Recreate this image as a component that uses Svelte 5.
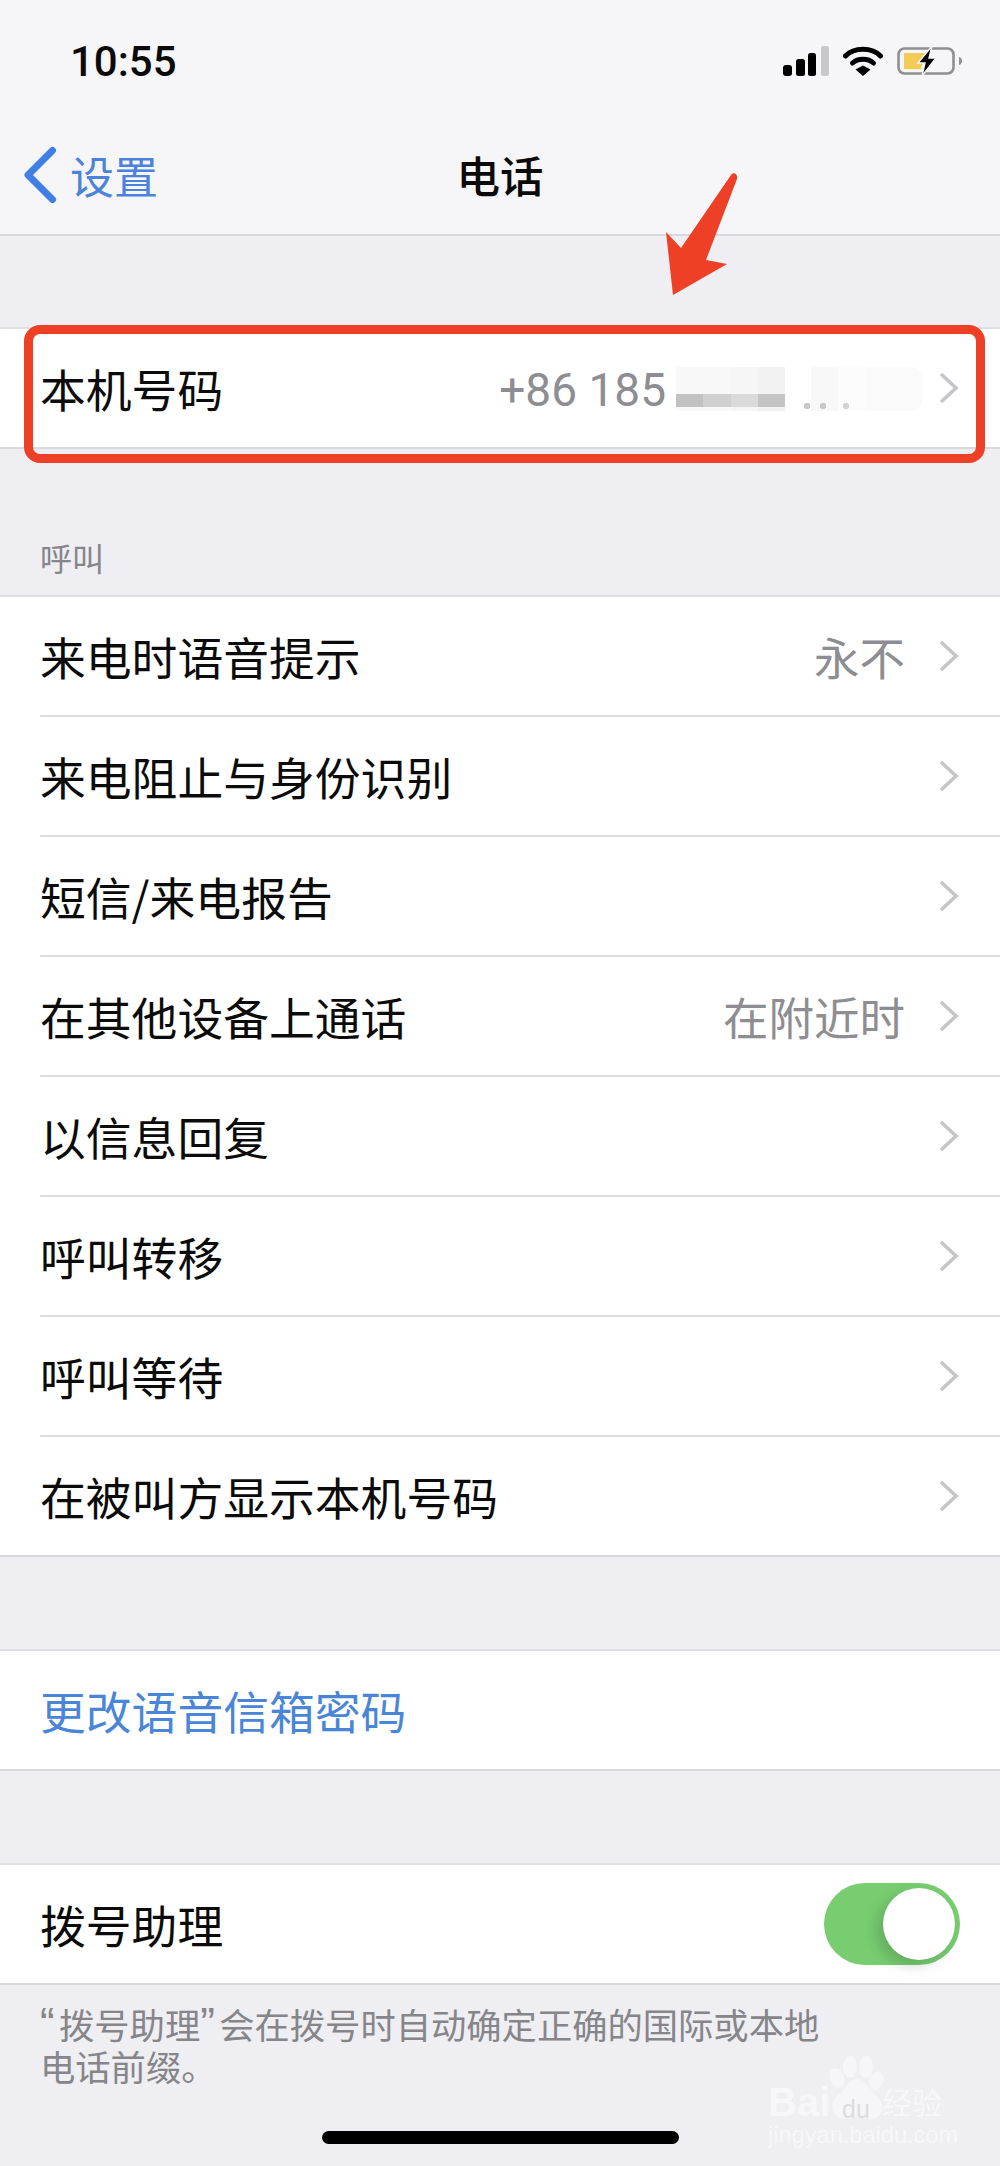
<script>
  const calls = [
    { t: '来电时语音提示', v: '永不' },
    { t: '来电阻止与身份识别' },
    { t: '短信/来电报告' },
    { t: '在其他设备上通话', v: '在附近时' },
    { t: '以信息回复' },
    { t: '呼叫转移' },
    { t: '呼叫等待' },
    { t: '在被叫方显示本机号码' }
  ];
</script>

<div class="page">
  <header class="nav">
    <div class="status">
      <span class="time">10:55</span>
      <div class="status-icons">
        <svg width="46" height="30" viewBox="0 0 46 30">
          <rect x="0" y="19" width="9" height="11" rx="3" fill="#000"/>
          <rect x="13" y="13" width="9" height="17" rx="2.5" fill="#000"/>
          <rect x="25" y="7" width="8" height="23" rx="2.5" fill="#000"/>
          <rect x="38" y="0" width="8" height="30" rx="2" fill="#c9c9cb"/>
        </svg>
        <svg width="40" height="30" viewBox="0 0 40 30">
          <path d="M2.5 10 C11 1 29 1 37.5 10" fill="none" stroke="#000" stroke-width="5" stroke-linecap="round"/>
          <path d="M9.5 17 C15 12 25 12 30.5 17" fill="none" stroke="#000" stroke-width="5" stroke-linecap="round"/>
          <path d="M12.5 23.5 L20 19.5 L27.5 23.5 L20 30 Z" fill="#000"/>
        </svg>
        <svg width="66" height="30" viewBox="0 0 66 30">
          <rect x="1.5" y="2.5" width="55" height="25" rx="6" fill="none" stroke="#8f8f91" stroke-width="2.6"/>
          <path d="M7 7 H28 L24 23 H7 Z" fill="#f2cc55"/>
          <path d="M62 11 C66 12 66 18 62 19 Z" fill="#8f8f91"/>
          <path d="M35 0 L21 17 H28 L25 30 L39 12 H32 Z" fill="#000" stroke="#f6f6f9" stroke-width="1.4"/>
        </svg>
      </div>
    </div>
    <div class="bar">
      <div class="back">
        <svg width="34" height="58" viewBox="0 0 34 58">
          <path d="M29.5 4.5 L5 29 L29.5 53.5" fill="none" stroke="#3f7fe6" stroke-width="7" stroke-linecap="round" stroke-linejoin="round"/>
        </svg>
        <span>设置</span>
      </div>
      <h1>电话</h1>
    </div>
  </header>

  <section class="group first">
    <div class="row">
      <span class="title">本机号码</span>
      <span class="value number">+86 185</span>
      <div class="mask"></div>
      <svg class="chev" width="22" height="34" viewBox="0 0 22 34"><path d="M3 3 L18 17 L3 31" fill="none" stroke="#c6c6ca" stroke-width="3.6"/></svg>
    </div>
  </section>

  <div class="label">呼叫</div>
  <section class="group">
    {#each calls as c}
      <div class="row">
        <span class="title">{c.t}</span>
        {#if c.v}<span class="value">{c.v}</span>{/if}
        <svg class="chev" width="22" height="34" viewBox="0 0 22 34"><path d="M3 3 L18 17 L3 31" fill="none" stroke="#c6c6ca" stroke-width="3.6"/></svg>
      </div>
    {/each}
  </section>

  <section class="group gap">
    <div class="row"><span class="title link">更改语音信箱密码</span></div>
  </section>

  <section class="group gap">
    <div class="row">
      <span class="title">拨号助理</span>
      <div class="toggle"><div class="knob"></div></div>
    </div>
  </section>

  <p class="foot"><span class="q">“</span>拨号助理<span class="q">”</span>会在拨号时自动确定正确的国际或本地<br/>电话前缀。</p>

  <div class="home"></div>

  <div class="highlight"></div>
  <svg class="arrow" width="80" height="130" viewBox="0 0 80 130">
    <path d="M71 5 C73 2 78 3 77 9 L46 90 L67 94 L13 125 L6 62 L21 78 Z" fill="#ee4026"/>
  </svg>

  <div class="paw">
    <svg width="60" height="66" viewBox="0 0 60 66">
      <g fill="#f6f6f9">
        <ellipse cx="9" cy="25" rx="7" ry="10" transform="rotate(-20 9 25)"/>
        <ellipse cx="22" cy="14" rx="7" ry="11"/>
        <ellipse cx="38" cy="14" rx="7" ry="11"/>
        <ellipse cx="48" cy="28" rx="7" ry="10" transform="rotate(20 48 28)"/>
        <path d="M29 26 C20 26 18 36 10 42 C0 50 4 66 18 66 C24 66 26 64 30 64 C34 64 37 66 43 66 C56 66 58 50 48 42 C40 36 38 26 29 26 Z"/>
      </g>
    </svg>
    <span class="b1">Bai</span><span class="b2">du</span><span class="b3">经验</span>
    <span class="b4">jingyan.baidu.com</span>
  </div>
</div>

<style>
  :global(body) { margin: 0; background: #eeeef3; }
  .page {
    position: relative;
    width: 1000px;
    height: 2166px;
    overflow: hidden;
    background: #eeeef3;
    font-family: "Noto Sans CJK SC", "Liberation Sans", sans-serif;
    color: #0b0b0b;
  }
  .nav {
    height: 234px;
    background: #f6f6f9;
    border-bottom: 2px solid #d9d9dd;
  }
  .status {
    height: 124px;
    display: flex;
    align-items: flex-start;
    justify-content: space-between;
    padding: 0 37px 0 70px;
  }
  .time {
    margin-top: 39px;
    font: 500 42px/46px Roboto, sans-serif;
    color: #0a0a0a;
  }
  .status-icons {
    display: flex;
    align-items: flex-start;
    gap: 14px;
    margin-top: 46px;
  }
  .status-icons svg { display: block; }
  .bar {
    position: relative;
    height: 110px;
    display: flex;
    align-items: center;
    justify-content: center;
  }
  .back {
    position: absolute;
    left: 23px;
    top: 0;
    bottom: 8px;
    display: flex;
    align-items: center;
    gap: 13px;
    color: #4a82dc;
    font-size: 44px;
    line-height: 56px;
  }
  h1 {
    margin: -8px 0 0;
    font-size: 43.5px;
    line-height: 60px;
    font-weight: 500;
    color: #0a0a0a;
  }
  .group {
    background: #fff;
    border-top: 2px solid #dfdfe3;
    border-bottom: 2px solid #d9d9dd;
  }
  .first { margin-top: 91px; }
  .gap { margin-top: 92px; }
  .label {
    height: 146px;
    padding: 88px 0 0 40px;
    box-sizing: border-box;
    font-size: 32px;
    line-height: 40px;
    color: #85858a;
  }
  .row {
    position: relative;
    height: 118px;
    margin-left: 40px;
    padding-right: 40px;
    display: flex;
    align-items: center;
    border-bottom: 2px solid #dcdce0;
  }
  .row:last-child { border-bottom: 0; }
  .title {
    flex: 1;
    font-size: 45.8px;
    line-height: 60px;
  }
  .link { color: #4a86d8; }
  .value {
    font-size: 45.5px;
    line-height: 60px;
    color: #8d8d92;
    margin-right: 33px;
  }
  .number {
    position: relative;
    top: 2px;
    font-family: Roboto, sans-serif;
    font-size: 46px;
    margin-right: 272px;
  }
  .chev { display: block; flex: none; }
  .mask {
    position: absolute;
    left: 636px;
    top: 38px;
    width: 246px;
    height: 44px;
    border-radius: 0 10px 10px 0;
    background:
      radial-gradient(circle 3px at 131px 39px, #c8c8c8 98%, transparent) no-repeat,
      radial-gradient(circle 3px at 147px 39px, #c8c8c8 98%, transparent) no-repeat,
      radial-gradient(circle 3px at 170px 39px, #d4d4d4 98%, transparent) no-repeat,
      linear-gradient(90deg, #c2c2c2 0 27px, #d0d0d0 27px 55px, #dadada 55px 82px, #c4c4c4 82px 109px, transparent 109px) 0 27px / 100% 13px no-repeat,
      linear-gradient(90deg, #f8f8f8 0 55px, #f6f6f6 55px 82px, #f2f2f2 82px 109px, #fff 109px 135px, #f8f8f8 135px 162px, #fcfcfc 162px 190px, #fafafa 190px);
  }
  .toggle {
    position: relative;
    width: 136px;
    height: 82px;
    border-radius: 41px;
    background: #77cd70;
    flex: none;
  }
  .knob {
    position: absolute;
    right: 5px;
    top: 5px;
    width: 72px;
    height: 72px;
    border-radius: 50%;
    background: #fff;
    box-shadow: -6px 6px 14px rgba(0, 0, 0, .16);
  }
  .foot {
    margin: 0;
    padding: 18px 0 0 40px;
    font-size: 35.3px;
    line-height: 42px;
    color: #85858a;
  }
  .q {
    display: inline-block;
    width: 19px;
    vertical-align: top;
    font-family: "Liberation Sans", sans-serif;
    font-size: 44px;
    line-height: 42px;
  }
  .home {
    position: absolute;
    left: 322px;
    top: 2131px;
    width: 357px;
    height: 13px;
    border-radius: 7px;
    background: #000;
  }
  .highlight {
    position: absolute;
    left: 24px;
    top: 325px;
    width: 961px;
    height: 138px;
    box-sizing: border-box;
    border: 9px solid #ee4026;
    border-radius: 16px;
  }
  .arrow { position: absolute; left: 660px; top: 170px; }
  .paw { position: absolute; left: 760px; top: 2050px; width: 200px; height: 100px; }
  .paw svg { position: absolute; left: 68px; top: 3px; }
  .paw span { position: absolute; font-family: "Liberation Sans", sans-serif; white-space: nowrap; }
  .b1 { left: 8px; top: 28px; font-size: 40px; line-height: 48px; font-weight: 700; color: #f7f7f9; }
  .b2 { left: 82px; top: 45px; font-size: 25px; line-height: 28px; color: #dcdce0; }
  .paw .b3 { left: 122px; top: 29px; font-family: "Noto Sans CJK SC", sans-serif; font-size: 30px; line-height: 44px; color: #f7f7f9; }
  .b4 { left: 8px; top: 71px; font-size: 23.6px; line-height: 28px; color: #f7f7f9; }
</style>
